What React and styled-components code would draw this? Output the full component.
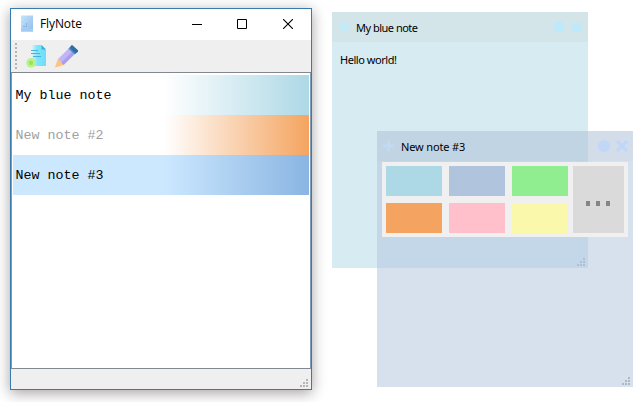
import React from 'react';
import styled, { createGlobalStyle } from 'styled-components';

const GlobalStyle = createGlobalStyle`
  * { box-sizing: border-box; }
  body { margin: 0; background: #fff; overflow: hidden; }
`;

const Desktop = styled.main`
  position: relative;
  width: 641px;
  height: 402px;
  overflow: hidden;
  background: #fff;
  font-family: 'Noto Sans', sans-serif;
  color: #000;
`;

const AppWindow = styled.section`
  position: absolute;
  left: 10px;
  top: 8px;
  width: 302px;
  height: 382px;
  display: flex;
  flex-direction: column;
  border: 1px solid #3a7bad;
  background: #fff;
  box-shadow: 0 3px 13px rgba(30, 20, 20, 0.4);
`;

const TitleBar = styled.header`
  display: flex;
  align-items: center;
  height: 31px;
  flex: none;
  padding: 0 0 2px 9px;
`;

const WindowTitle = styled.h1`
  flex: 1;
  margin: 0 0 0 7px;
  font: 400 12px/20px 'Open Sans', sans-serif;
  letter-spacing: -0.1px;
`;

const CaptionButton = styled.button`
  display: flex;
  align-items: center;
  justify-content: center;
  width: ${(p) => p.$width}px;
  height: 29px;
  padding: 0;
  border: 0;
  background: none;
`;

const Toolbar = styled.div`
  display: flex;
  align-items: center;
  height: 32px;
  flex: none;
  padding-left: 4px;
  background: #efefef;
`;

const ToolButton = styled.button`
  display: flex;
  width: 24px;
  height: 24px;
  margin-left: ${(p) => p.$gap}px;
  padding: 0;
  border: 0;
  background: none;
`;

const NoteList = styled.ul`
  flex: 1;
  margin: 0;
  padding: 2px 1px 0 1px;
  list-style: none;
  border: 1px solid #828790;
  border-left-color: #7d9cb8;
  border-right-color: #7d9cb8;
`;

const NoteRow = styled.li`
  display: flex;
  align-items: center;
  height: 40px;
  padding: 1px 0 0 2.5px;
  font: 13.33px/16px 'Liberation Mono', monospace;
  color: ${(p) => (p.$muted ? '#a0a0a0' : '#000')};
  background: linear-gradient(to right, ${(p) => p.$from} 51%, ${(p) => p.$to} 100%);
`;

const StatusBar = styled.footer`
  display: flex;
  justify-content: flex-end;
  align-items: flex-end;
  height: 20px;
  flex: none;
  padding: 0 2px 1px 0;
  background: #efefef;
`;

const StickyNote = styled.article`
  position: absolute;
  left: ${(p) => p.$x}px;
  top: ${(p) => p.$y}px;
  width: 256px;
  height: 256px;
  display: flex;
  flex-direction: column;
  background: ${(p) => p.$color};
`;

const NoteHeader = styled.header`
  display: flex;
  align-items: center;
  height: 30px;
  flex: none;
  padding: 0 4px 0 5px;
  background: ${(p) => p.$shade};
`;

const NoteTitle = styled.h2`
  flex: 1;
  margin: 1px 0 0 5px;
  font: 400 11px/16px 'Noto Sans', sans-serif;
  letter-spacing: ${(p) => p.$tracking}px;
`;

const NoteText = styled.p`
  flex: 1;
  margin: 0;
  padding: 10px 8px;
  font-size: 11px;
  line-height: 16px;
  letter-spacing: -0.45px;
`;

const NoteFooter = styled.footer`
  display: flex;
  justify-content: flex-end;
  margin-top: auto;
  padding: 0 2px 1px 0;
`;

const Palette = styled.div`
  display: grid;
  grid-template-columns: 56px 56px 56px 51px;
  grid-template-rows: 30px 30px;
  gap: 7px;
  width: 246px;
  height: 75px;
  margin: 1px 0 0 5px;
  padding: 4px;
  background: #f0f0f0;
`;

const Swatch = styled.button`
  padding: 0;
  border: 0;
  background: ${(p) => p.$color};
`;

const MoreColors = styled.button`
  display: flex;
  align-items: center;
  justify-content: center;
  gap: 6px;
  grid-column: 4;
  grid-row: 1 / 3;
  margin-left: -2px;
  width: 51px;
  padding: 8px 1px 0 0;
  border: 0;
  background: #dadada;
`;

const MoreDot = styled.span`
  width: 4px;
  height: 5px;
  background: #858585;
`;

const NotebookIcon = () => (
  <svg width="13" height="17" viewBox="0 0 13 17">
    <defs>
      <linearGradient id="notebook" x1="0" y1="0" x2="1" y2="1">
        <stop offset="0" stopColor="#c3e4fa" />
        <stop offset="1" stopColor="#92bcec" />
      </linearGradient>
    </defs>
    <rect x="1" y="0.5" width="12" height="16" fill="url(#notebook)" />
    <path d="M0.5 5h2M0.5 9h2" stroke="#d3ecfb" />
    <path d="M6.5 8v3.5H3" fill="none" stroke="#8fb4e2" />
    <path d="M1 13.5h12v3H1z" fill="#a2cbf2" />
  </svg>
);

const AddNoteIcon = () => (
  <svg width="24" height="24" viewBox="0 0 24 24">
    <defs>
      <linearGradient id="page" x1="0" y1="0" x2="1" y2="0">
        <stop offset="0" stopColor="#c4f3fb" />
        <stop offset="0.35" stopColor="#7fe5fa" />
        <stop offset="1" stopColor="#6fdcf8" />
      </linearGradient>
    </defs>
    <path d="M8.5 1h9l4.500 4.500V22H8.500z" fill="url(#page)" />
    <path d="M17.500 1v4.500H22z" fill="#35b3d4" />
    <path d="M7 6.500h7M7 9.500h9M9 12.500h8" stroke="#45b4dc" strokeWidth="1" />
    <circle cx="7" cy="18.800" r="4.800" fill="#bdf08c" />
    <circle cx="7" cy="18.800" r="2.200" fill="#98e55d" />
  </svg>
);

const PencilIcon = () => (
  <svg width="24" height="24" viewBox="0 0 25 24">
    <path d="M4 15.500 16 3.500l6 6L10 21.500z" fill="#c1b4f7" />
    <path d="m7.500 19 12-12 2.500 2.500L10 21.500z" fill="#a99fe9" />
    <path d="m4 15.500 6 6L1 24z" fill="#ffc37c" />
    <path d="m16 3.500 2-2.500q.7-.7 1.500 0L25 6v1.500l-3 2.500z" fill="#2d6ca5" />
    <path d="m15.500 4 6.500 6" stroke="#4d8dbd" strokeWidth="1.400" />
  </svg>
);

const ToolbarHandle = () => (
  <svg width="3" height="27" viewBox="0 0 3 27">
    <path d="M1 0v27" stroke="#b4b4b4" strokeWidth="2" strokeDasharray="2 2" />
  </svg>
);

const SizeGrip = ({ color = '#b5b5b5' }) => (
  <svg width="9" height="9" viewBox="0 0 9 9">
    <path d="M6 0h2v2H6zM3 3h2v2H3zM6 3h2v2H6zM0 6h2v2H0zM3 6h2v2H3zM6 6h2v2H6z" fill={color} />
  </svg>
);

const PlusIcon = ({ color, soft }) => (
  <svg width="14" height="14" viewBox="0 0 14 14">
    {soft ? (
      <path d="M6 1h2l4 4v4l-4 3H6L2 8V6z" fill={color} />
    ) : (
      <path d="M6.500 1.500v11M1 7h11" stroke={color} strokeWidth="3" />
    )}
  </svg>
);

const NoteControls = ({ color, soft }) => (
  <svg width="34" height="14" viewBox="0 0 34 14">
    <circle cx="9" cy="7" r={soft ? 5.6 : 6} fill={color} />
    {soft ? (
      <path d="m22 2 5 1.500L32 2l-.5 5 .5 5-5-1-5 1 .5-5z" fill={color} />
    ) : (
      <path d="m22 2 10 10M32 2 22 12" stroke={color} strokeWidth="3.400" />
    )}
  </svg>
);

const notes = [
  { title: 'My blue note', from: '#ffffff', to: '#add8e6' },
  { title: 'New note #2', from: '#ffffff', to: '#f4a460', muted: true },
  { title: 'New note #3', from: '#cce8ff', to: '#8ab5e2' },
];

const swatches = ['#add8e6', '#b0c4de', '#90ee90', '#f4a460', '#ffc0cb', '#faf8aa'];

export default function App() {
  return (
    <Desktop>
      <GlobalStyle />
      <AppWindow>
        <TitleBar>
          <NotebookIcon />
          <WindowTitle>FlyNote</WindowTitle>
          <CaptionButton $width={45} aria-label="Minimize">
            <svg width="10" height="10"><path d="M0 5.5h10" stroke="#000" /></svg>
          </CaptionButton>
          <CaptionButton $width={45} aria-label="Maximize">
            <svg width="10" height="10"><path d="M.5.5h9v9h-9z" fill="none" stroke="#000" /></svg>
          </CaptionButton>
          <CaptionButton $width={47} aria-label="Close">
            <svg width="10" height="10"><path d="m0 0 10 10M10 0 0 10" stroke="#000" strokeWidth="1.1" /></svg>
          </CaptionButton>
        </TitleBar>
        <Toolbar>
          <ToolbarHandle />
          <ToolButton $gap={6} aria-label="Add note"><AddNoteIcon /></ToolButton>
          <ToolButton $gap={6} aria-label="Edit note"><PencilIcon /></ToolButton>
        </Toolbar>
        <NoteList>
          {notes.map((n) => (
            <NoteRow key={n.title} $from={n.from} $to={n.to} $muted={n.muted}>{n.title}</NoteRow>
          ))}
        </NoteList>
        <StatusBar><SizeGrip /></StatusBar>
      </AppWindow>

      <StickyNote $x={332} $y={12} $color="#d7ebf2">
        <NoteHeader $shade="#d4e5e9">
          <PlusIcon color="#c4eaf8" soft />
          <NoteTitle $tracking={-0.5}>My blue note</NoteTitle>
          <NoteControls color="#bde9fa" soft />
        </NoteHeader>
        <NoteText>Hello world!</NoteText>
        <NoteFooter><SizeGrip color="#a8bdc8" /></NoteFooter>
      </StickyNote>

      <StickyNote $x={377} $y={131} $color="rgba(176, 196, 222, 0.5)">
        <NoteHeader $shade="rgba(170, 185, 200, 0.1)">
          <PlusIcon color="#c2d9f6" />
          <NoteTitle $tracking={-0.15}>New note #3</NoteTitle>
          <NoteControls color="#c0d7f8" />
        </NoteHeader>
        <Palette>
          {swatches.map((c) => <Swatch key={c} $color={c} />)}
          <MoreColors aria-label="More colors"><MoreDot /><MoreDot /><MoreDot /></MoreColors>
        </Palette>
        <NoteFooter><SizeGrip color="#aeb7c4" /></NoteFooter>
      </StickyNote>
    </Desktop>
  );
}
